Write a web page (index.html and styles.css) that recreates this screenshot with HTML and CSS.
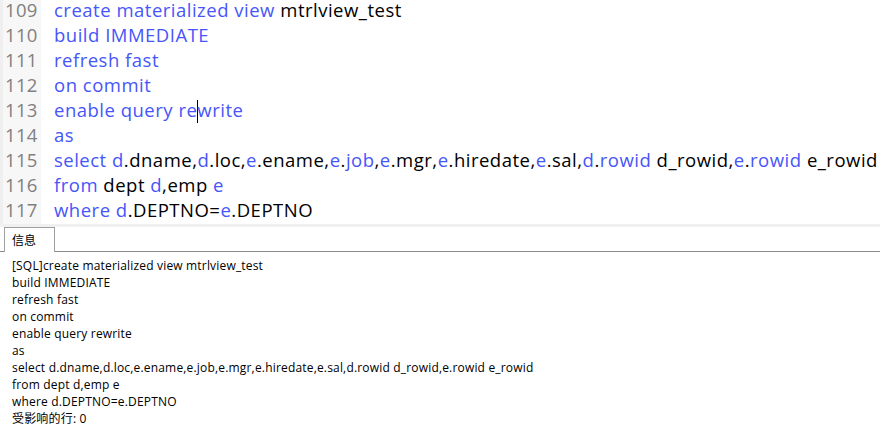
FILE: index.html
```html
<!DOCTYPE html>
<html>
<head>
<meta charset="utf-8">
<link rel="stylesheet" href="styles.css">
</head>
<body>
<div class="editor">
  <div class="gutter">
    <div class="ln">109</div><div class="ln">110</div><div class="ln">111</div><div class="ln">112</div><div class="ln">113</div><div class="ln">114</div><div class="ln">115</div><div class="ln">116</div><div class="ln">117</div>
  </div>
  <div class="code">
    <div class="line"><span class="kw">create materialized view</span> mtrlview_test</div>
    <div class="line"><span class="kw">build IMMEDIATE</span></div>
    <div class="line"><span class="kw">refresh fast</span></div>
    <div class="line"><span class="kw">on commit</span></div>
    <div class="line"><span class="kw">enable query re</span><span class="caret"></span><span class="kw">write</span></div>
    <div class="line"><span class="kw">as</span></div>
    <div class="line"><span class="kw">select d</span>.dname,<span class="kw">d</span>.loc,<span class="kw">e</span>.ename,<span class="kw">e</span>.<span class="kw">job</span>,<span class="kw">e</span>.mgr,<span class="kw">e</span>.hiredate,<span class="kw">e</span>.sal,<span class="kw">d</span>.<span class="kw">rowid</span> d_rowid,<span class="kw">e</span>.<span class="kw">rowid</span> e_rowid</div>
    <div class="line"><span class="kw">from</span> dept <span class="kw">d</span>,emp <span class="kw">e</span></div>
    <div class="line"><span class="kw">where d</span>.DEPTNO=<span class="kw">e</span>.DEPTNO</div>
  </div>
</div>
<div class="splitter"></div>
<div class="tabs">
  <div class="tab">信息</div>
</div>
<div class="output">
  <div>[SQL]create materialized view mtrlview_test</div>
  <div>build IMMEDIATE</div>
  <div>refresh fast</div>
  <div>on commit</div>
  <div>enable query rewrite</div>
  <div>as</div>
  <div>select d.dname,d.loc,e.ename,e.job,e.mgr,e.hiredate,e.sal,d.rowid d_rowid,e.rowid e_rowid</div>
  <div>from dept d,emp e</div>
  <div>where d.DEPTNO=e.DEPTNO</div>
  <div>受影响的行: 0</div>
</div>
</body>
</html>
```
FILE: styles.css
```css
html, body {
  margin: 0;
  padding: 0;
  background: #ffffff;
  width: 880px;
  height: 428px;
  overflow: hidden;
  font-family: "Open Sans", "Noto Sans CJK SC", sans-serif;
}
.editor {
  display: flex;
  height: 224px;
  overflow: hidden;
  background: #ffffff;
}
.gutter {
  width: 41px;
  flex: none;
  background: #f7f7f7;
  border-left: 3px solid #efefef;
  box-sizing: border-box;
}
.ln {
  height: 25px;
  line-height: 20px;
  font-size: 18.5px;
  color: #808080;
  padding-left: 2px;
  letter-spacing: 0.3px;
}
.code {
  padding-left: 13px;
  white-space: nowrap;
  font-size: 18.5px;
  letter-spacing: 0.5px;
  color: #000000;
}
.line {
  height: 25px;
  line-height: 20px;
}
.kw {
  color: #4656f8;
}
.caret {
  display: inline-block;
  width: 1px;
  height: 23px;
  background: #000;
  vertical-align: -6px;
  margin: 0 -1px 0 0;
}
.splitter {
  height: 3px;
  background: #f0f0f0;
}
.tabs {
  height: 24px;
  border-bottom: 1px solid #8a8a8a;
  display: flex;
  padding-left: 4px;
}
.tab {
  width: 51px;
  box-sizing: border-box;
  height: 25px;
  border: 1px solid #a0a0a0;
  border-bottom: none;
  background: #ffffff;
  font-size: 12px;
  line-height: 24px;
  padding-left: 7px;
  font-family: "Noto Sans CJK SC", sans-serif;
}
.output {
  padding: 5px 0 0 12px;
  font-size: 12px;
  letter-spacing: 0.18px;
  line-height: 17px;
  color: #000;
  white-space: nowrap;
}
```
